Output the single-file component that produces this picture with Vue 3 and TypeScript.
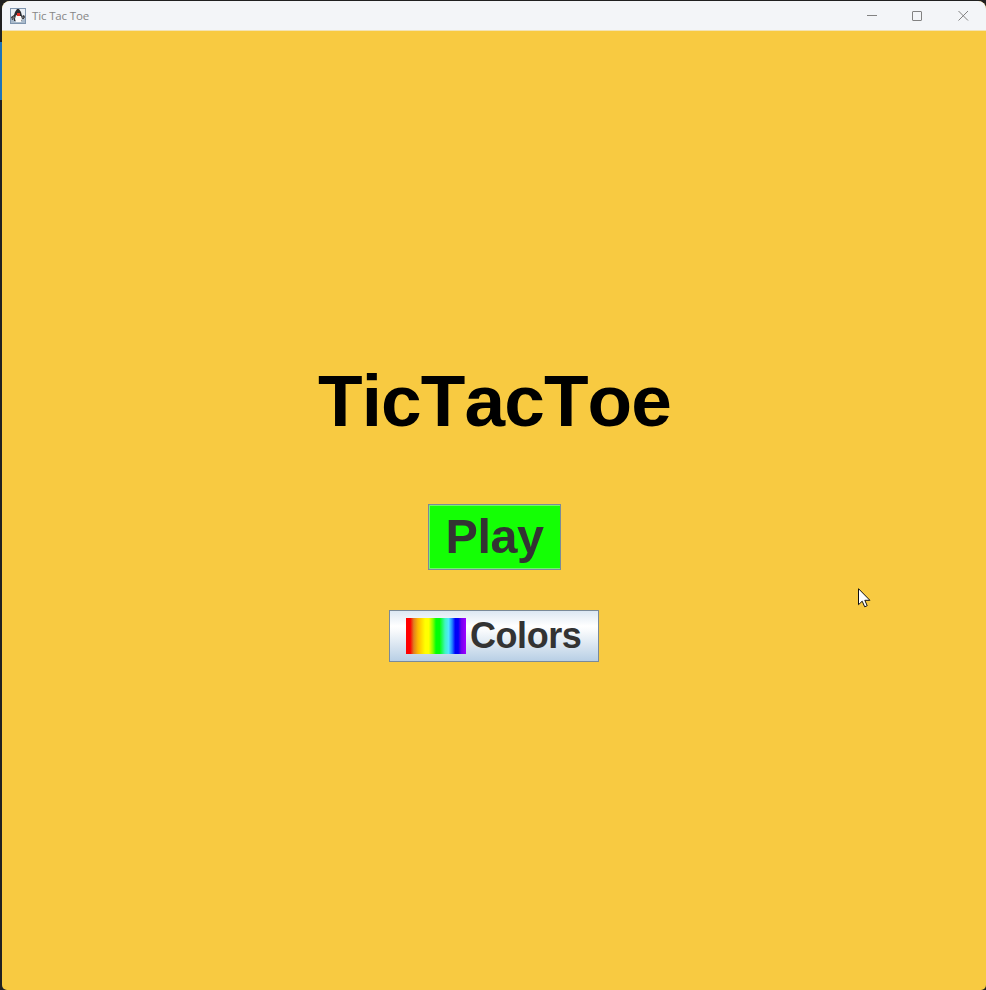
<script setup lang="ts">
const windowTitle: string = 'Tic Tac Toe'
const heading: string = 'TicTacToe'
</script>

<template>
  <div class="desktop">
    <div class="window">
      <header class="titlebar">
        <svg class="app-icon" viewBox="0 0 16 16" aria-hidden="true">
          <rect x="0" y="0" width="16" height="16" fill="#7f95ae" />
          <rect x="1" y="1" width="14" height="10" fill="#e9eff5" />
          <rect x="1" y="11" width="14" height="4" fill="#a9bacb" />
          <path d="M7 1h2l2 3 1 4 2-1 1 2-1 2-2 0v2H4v-2l-2 1-1-3 3-2 1-3z" fill="#2b2c30" />
          <path d="M6 7l2 1 3 0 1 3-1 3H6L5 11z" fill="#fafafa" />
          <path d="M3 8l2 1-1 2-2 0zM12 8l2 1-1 2-1-1z" fill="#6b6f75" />
          <rect x="7" y="5" width="3" height="3" fill="#e02c24" />
        </svg>
        <span class="title">{{ windowTitle }}</span>
        <div class="controls">
          <svg viewBox="0 0 46 30"><path d="M21 14.5h10" /></svg>
          <svg viewBox="0 0 46 30"><rect x="20.5" y="10.5" width="9" height="9" rx="0.5" /></svg>
          <svg viewBox="0 0 46 30"><path d="M20.5 10l9.5 9.5M30 10l-9.5 9.5" /></svg>
        </div>
      </header>
      <main class="content">
        <h1>{{ heading }}</h1>
        <button class="play" type="button">Play</button>
        <button class="colors" type="button">
          <span class="rainbow"></span>
          <span class="label">Colors</span>
        </button>
      </main>
    </div>
    <span class="accent"></span>
    <svg class="cursor" viewBox="0 0 13 20" aria-hidden="true">
      <path d="M.5.7v16l3.7-3.5 2.5 5.6 2.5-1.1-2.4-5.4h5.1z" fill="#fff" stroke="#111" />
    </svg>
  </div>
</template>

<style>
body {
  margin: 0;
  overflow: hidden;
}
</style>

<style scoped>
.desktop {
  position: relative;
  box-sizing: border-box;
  width: 986px;
  height: 990px;
  padding: 1px 0 0 2px;
  background: #202020;
  font-family: 'Liberation Sans', Arial, sans-serif;
}
.window {
  display: flex;
  flex-direction: column;
  height: 989px;
  border-radius: 8px 8px 5px 5px;
  overflow: hidden;
  background: #f8ca41;
}
.titlebar {
  display: flex;
  align-items: center;
  box-sizing: border-box;
  height: 30px;
  flex: none;
  padding-left: 8px;
  background: #f3f5f8;
  border-bottom: 1px solid #f3e3b4;
}
.app-icon {
  width: 16px;
  height: 16px;
}
.title {
  margin-left: 6px;
  font: 11.5px/16px 'Open Sans', 'Noto Sans', sans-serif;
  letter-spacing: -0.15px;
  color: #868686;
}
.controls {
  display: flex;
  margin-left: auto;
  margin-right: 2px;
}
.controls svg {
  width: 46px;
  height: 30px;
  fill: none;
  stroke: #828282;
}
.content {
  display: flex;
  flex: 1;
  flex-direction: column;
  align-items: center;
}
h1 {
  margin: 329px 0 0;
  font-size: 73px;
  line-height: 82px;
  font-weight: 700;
  font-kerning: none;
  letter-spacing: -0.9px;
  padding-left: 1px;
  color: #000;
}
button {
  display: flex;
  align-items: center;
  justify-content: center;
  box-sizing: border-box;
  border: 1px solid #7a8a99;
  padding: 0;
  font-family: inherit;
  font-weight: 700;
  font-kerning: none;
  color: #333;
}
.play {
  width: 133px;
  height: 66px;
  margin-top: 62px;
  padding-bottom: 3px;
  padding-left: 1px;
  background: #14ff05;
  box-shadow: inset 1px 1px #72f668, inset 0 -1px #72f668;
  font-size: 48.5px;
  letter-spacing: -0.5px;
}
.colors {
  width: 210px;
  height: 52px;
  margin-top: 40px;
  justify-content: flex-start;
  padding-left: 16px;
  background: linear-gradient(#dde8f3, #fff 30%, #f8fafc 40%, #b8cfe5);
  font-size: 36px;
  letter-spacing: -0.45px;
}
.rainbow {
  width: 60px;
  height: 36px;
  background: linear-gradient(90deg, #f00 0 7%, #e08020 13%, #ffb800 20%, #ff0 32% 38%, #80ff00 45%, #00ff08 50% 56%, #40f5c0 65%, #50e8ff 71%, #2080ff 77%, #0000f8 82% 87%, #7000f0 92%, #a000ff);
}
.label {
  margin-left: 4px;
}
.accent {
  position: absolute;
  left: 0;
  top: 42px;
  width: 2px;
  height: 58px;
  background: #1d73b8;
}
.cursor {
  position: absolute;
  left: 858px;
  top: 588px;
  width: 13px;
  height: 20px;
}
</style>
